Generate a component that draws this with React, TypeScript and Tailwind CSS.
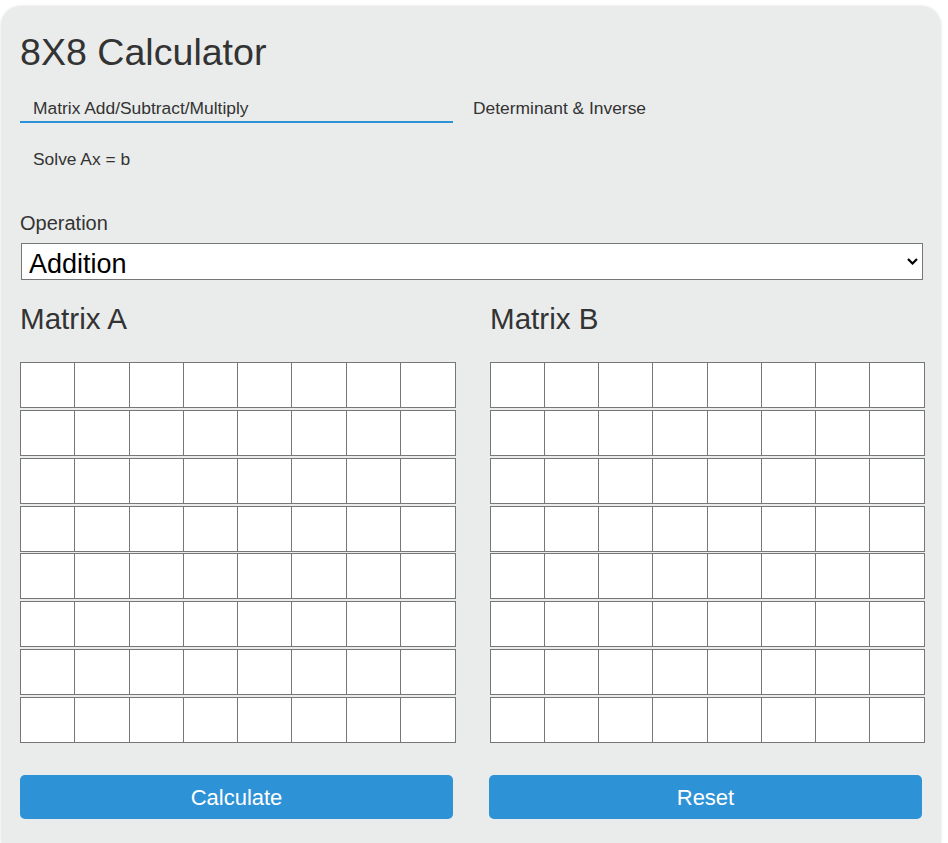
import { useState } from "react";

const tabs = ["Matrix Add/Subtract/Multiply", "Determinant & Inverse", "Solve Ax = b"];

const MatrixGrid = ({ name }: { name: string }) => (
  <div>
    <h2 className="text-[29.6px] leading-[33px] text-[#333]">{name}</h2>
    <div className="mt-[27px] flex flex-col gap-[1.86px]">
      {Array.from({ length: 8 }).map((_, r) => (
        <div key={r} className="grid h-[46px] grid-cols-8 border border-[#767676] bg-white">
          {Array.from({ length: 8 }).map((_, c) => (
            <input
              key={c}
              type="text"
              aria-label={`${name} row ${r + 1} column ${c + 1}`}
              className="min-w-0 border-r border-[#767676] bg-white px-1 text-[16px] outline-none last:border-r-0"
            />
          ))}
        </div>
      ))}
    </div>
  </div>
);

export default function App() {
  const [active, setActive] = useState(0);

  return (
    <div className="min-h-screen bg-white font-['Liberation_Sans',Arial,sans-serif]">
      <div className="ml-[1px] mt-[6px] w-[940px] rounded-[20px] bg-[#eaeceb] pb-[40px] pl-[19px] pr-[16px] pt-[25px] shadow-[0_0_3px_rgba(0,0,0,0.12)]">
        <h1 className="text-[37.6px] leading-[42px] text-[#333]">8X8 Calculator</h1>

        {/* tabs */}
        <div className="mt-[21px] flex flex-wrap gap-x-[7px] gap-y-[22px]">
          {tabs.map((t, i) => (
            <button
              key={t}
              onClick={() => setActive(i)}
              className={`flex h-[29px] w-[433px] items-center border-b-2 pl-[13px] text-left text-[17.4px] leading-[20px] text-[#333] ${
                active === i ? "border-[#2e92d7]" : "border-transparent"
              }`}
            >
              {t}
            </button>
          ))}
        </div>

        <label className="mt-[38px] block text-[20px] leading-[23px] text-[#333]">Operation</label>
        <div className="relative ml-[1px] mt-[8px] w-[902px]">
          <select className="h-[37px] w-full appearance-none border border-[#767676] bg-white pb-[3px] pl-[7px] text-[27px] text-black outline-none">
            <option>Addition</option>
            <option>Subtraction</option>
            <option>Multiplication</option>
          </select>
          <svg
            className="pointer-events-none absolute right-[5px] top-[15px]"
            width="11"
            height="7"
            viewBox="0 0 11 7"
            fill="none"
          >
            <polyline points="1,1 5.5,5.5 10,1" stroke="#000" strokeWidth="2.2" />
          </svg>
        </div>

        <div className="mt-[22px] grid grid-cols-[436px_435px] gap-x-[34px]">
          <MatrixGrid name="Matrix A" />
          <MatrixGrid name="Matrix B" />
        </div>

        <div className="mt-[32px] grid grid-cols-[433px_433px] gap-x-[36px]">
          <button className="h-[44px] rounded-[5px] bg-[#2e92d7] text-[22px] text-white">Calculate</button>
          <button className="h-[44px] rounded-[5px] bg-[#2e92d7] text-[22px] text-white">Reset</button>
        </div>
      </div>
    </div>
  );
}
